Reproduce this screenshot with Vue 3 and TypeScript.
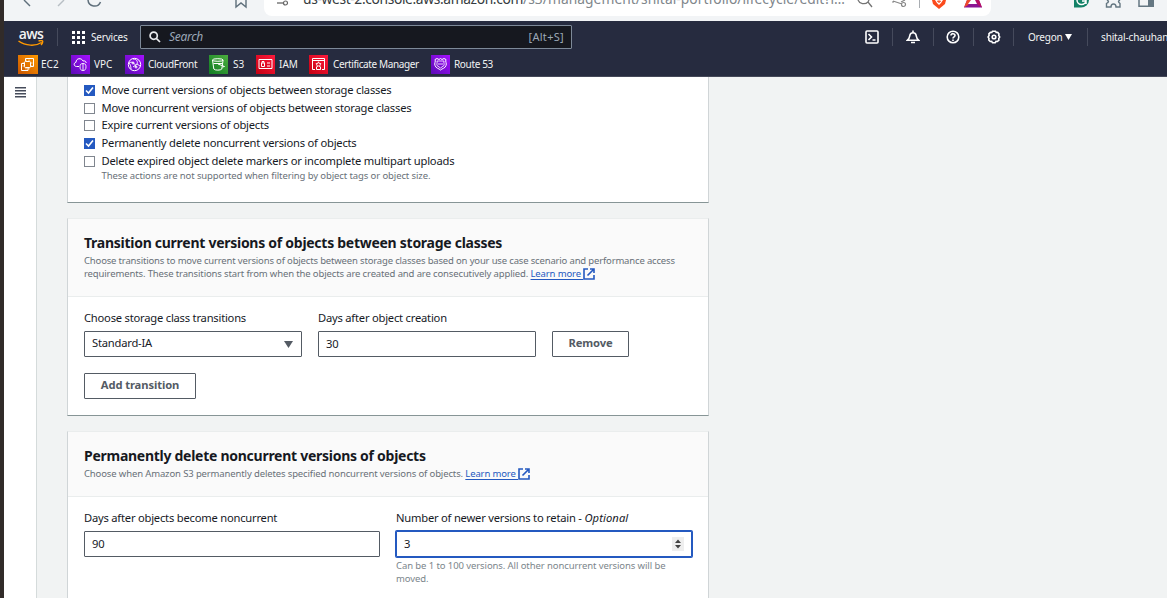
<script setup lang="ts">
import { ref } from 'vue'

interface Service { name: string; icon: string; tone: string }
const services: Service[] = [
  { name: 'EC2', icon: 'ec2', tone: 'orange' },
  { name: 'VPC', icon: 'vpc', tone: 'purple' },
  { name: 'CloudFront', icon: 'cloudfront', tone: 'purple' },
  { name: 'S3', icon: 's3', tone: 'green' },
  { name: 'IAM', icon: 'iam', tone: 'red' },
  { name: 'Certificate Manager', icon: 'cert', tone: 'red' },
  { name: 'Route 53', icon: 'route', tone: 'purple' },
]
const actions = ref([
  { label: 'Move current versions of objects between storage classes', checked: true },
  { label: 'Move noncurrent versions of objects between storage classes', checked: false },
  { label: 'Expire current versions of objects', checked: false },
  { label: 'Permanently delete noncurrent versions of objects', checked: true },
  { label: 'Delete expired object delete markers or incomplete multipart uploads', checked: false },
])
</script>

<template>
  <div class="screen">
    <div class="edge"></div>
    <div class="window">
      <div class="browser">
        <svg class="chrome" width="1163" height="21" viewBox="4 0 1163 21" fill="none">
          <path d="M24 0l6 6" stroke="#5f6f7b" stroke-width="1.4" />
          <path d="M64 0l-6 6" stroke="#b7bec4" stroke-width="1.4" />
          <path d="M88 0a6.5 6.5 0 0 0 12.5 2" stroke="#5f6f7b" stroke-width="1.5" />
          <path d="M236 0v7l5-4 5 4V0" stroke="#5f6f7b" stroke-width="1.4" />
          <path d="M264 0h727v8a8 8 0 0 1-8 8H272a8 8 0 0 1-8-8z" fill="#fff" />
          <path d="M277 3h6" stroke="#666" stroke-width="1.3" />
          <circle cx="285.500" cy="3" r="2" stroke="#666" stroke-width="1.2" />
          <path d="M858 0a6 5.500 0 0 0 10 2l4 5M868 2l1-2" stroke="#737373" stroke-width="1.3" />
          <path d="M893 1l9 3M892 2h2M905 0l-4 2" stroke="#888" stroke-width="1.2" />
          <circle cx="903.500" cy="4.500" r="2" stroke="#888" stroke-width="1.2" />
          <path d="M919.500 0v8" stroke="#a9adb2" />
          <path d="M932 0h14l-1 4-6 5-6-5z" fill="#fb4a1c" />
          <path d="M935 0h8l-2 3-2 2-2-2z" fill="#fff" /><path d="M939 0v3m-2-2 2 1 2-1" stroke="#fb4a1c" />
          <path d="M967 0h12l3 7.500h-18z" fill="#8b1593" /><path d="M967 0h4l-3 5-4 2.500z" fill="#f04a2a" /><path d="M975 0h4l3 7.500-4-2.500z" fill="#b80f63" />
          <path d="M971 0h4l2 4h-9z" fill="#fff" />
          <path d="M1074 0h15a8 7.500 0 0 1-8 7.500h-7z" fill="#138267" />
          <path d="M1077 0a4.500 4.500 0 0 0 9 0M1082 1h4v3" stroke="#fff" stroke-width="1.5" />
          <path d="M1107 0c2 1 2 2-.5 3.500V7h4.500c0-4 5-4 5 0h4V3.500c-2-1.500-2-2.500 0-3.500" stroke="#657782" stroke-width="1.4" />
          <path d="M1139 0v6.300h14V0" stroke="#657782" stroke-width="1.5" /><path d="M1148 0h6v7h-6z" fill="#657782" />
        </svg>
        <div class="url">us-west-2.console.aws.amazon.com<span>/s3/management/shital-portfolio/lifecycle/edit?r…</span></div>
      </div>

      <header class="nav">
        <div class="top">
          <div class="aws"><span>aws</span>
            <svg width="26" height="7" viewBox="0 0 26 7" fill="none" stroke="#f90" stroke-width="1.5"><path d="M0.500 1c7 5 17 5.500 23 1.500M20.500 1c2-.6 3.500-.6 4 0 .3.700-.2 2.500-1.400 3.900" /></svg>
          </div>
          <i class="bar first"></i>
          <svg class="grid" width="13" height="13" fill="#fff"><path d="M0 0h3v3H0zM5 0h3v3H5zM10 0h3v3h-3zM0 5h3v3H0zM5 5h3v3H5zM10 5h3v3h-3zM0 10h3v3H0zM5 10h3v3H5zM10 10h3v3h-3z" /></svg>
          <span class="services">Services</span>
          <div class="search">
            <svg width="12" height="12" viewBox="0 0 12 12" fill="none" stroke="#e8eaed" stroke-width="1.700"><circle cx="4.700" cy="4.700" r="3.600" /><path d="M7.300 7.300 11 11" /></svg>
            <em>Search</em><span>[Alt+S]</span>
          </div>
          <div class="tools">
            <div class="tool t1"><svg width="14" height="14" viewBox="0 0 14 14"><rect x="1" y="1" width="12" height="12" rx="1" /><path d="M3.500 4l3 3-3 3M7.500 10h3" /></svg></div>
            <i class="bar"></i>
            <div class="tool t2"><svg width="14" height="14" viewBox="0 0 14 14"><path d="M7 .5v2M1.500 10.200c1.800-1.500 2-3 2.400-5C4.300 3.300 5.500 2.700 7 2.700s2.700.6 3.100 2.500c.4 2 .6 3.500 2.400 5zM5 12.500h4" /></svg></div>
            <i class="bar"></i>
            <div class="tool t3"><svg width="14" height="14" viewBox="0 0 14 14"><circle cx="7" cy="7" r="5.800" /><path d="M5 5.400C5 3 9 3.200 9 5.400 9 7 7 6.700 7 8.500M7 9.500v1.400" /></svg></div>
            <i class="bar"></i>
            <div class="tool t4"><svg width="14" height="14" viewBox="0 0 14 14"><path d="M5.500 1.200h3l.7 1.300 1.500-.1 1.300 1.500-.3 1.400 1 1.700-1 1.600.2 1.500-1.500 1.400-1.400-.1-.8 1.400H5.500l-.8-1.400-1.500.1L1.800 10l.2-1.400-.9-1.600 1-1.700-.2-1.400 1.500-1.500 1.400.1z" /><circle cx="7" cy="7" r="1.800" /></svg></div>
            <i class="bar"></i>
            <div class="region"><span>Oregon</span><svg width="7" height="6" fill="#fff"><path d="M0 0h7L3.500 6z" /></svg></div>
            <i class="bar"></i>
            <span class="account">shital-chauhan</span>
          </div>
        </div>
        <div class="favorites">
          <div v-for="s in services" :key="s.name" class="favorite" :class="s.icon">
            <span class="tile" :class="s.tone">
              <svg width="19" height="19" viewBox="0 0 19 19" fill="none" stroke="#fff" stroke-width="1">
                <template v-if="s.icon === 'ec2'"><path d="M7.500 6V3.500h8v8h-3M10 13v2.500H3.500v-7H6" /><rect x="6.500" y="6.500" width="6" height="6" rx="1" /><path d="M8 4.500v2M11 4.500v2M12.500 8h2M12.500 11h2M8 12.500v2M11 12.500v2M4.500 8h2M4.500 11h2" stroke-width=".7" /></template>
                <template v-else-if="s.icon === 'vpc'"><path d="M8 11.500H5.500c-3-.2-3-3.800-.5-4.200C5 3 10.500 2.500 12 6c2-.5 3.200.5 3.200 2" /><path d="M12 8.500c2 0 3 .8 3 3.300s-1 3.700-3 3.700-3-1.200-3-3.700 1-3.300 3-3.300zM12 8.500v7" stroke-width=".9" /></template>
                <template v-else-if="s.icon === 'cloudfront'"><circle cx="9.500" cy="9.500" r="6.200" /><path d="M8 4c4 0 5 3 4 5L8 12M4 8c3-2 6 0 7 4M6 14c0-3-1-5-2-6M12 9l3 2" stroke-width=".9" /><circle cx="8" cy="8" r="1" /><circle cx="11" cy="12" r="1" /></template>
                <template v-else-if="s.icon === 's3'"><path d="M3.500 5l1.300 9c1 1.500 7 1.500 8 0l1.300-9M9 9l6.500 2.500-2 .5" /><ellipse cx="8.800" cy="5" rx="5.300" ry="1.300" /><path d="M4.500 8.500h9" /></template>
                <template v-else-if="s.icon === 'iam'"><path d="M3 4.500h13v9H3zM5.500 8h3v3.500h-3zM6 8V6.500h2V8M11 8h3M11 11h3" /></template>
                <template v-else-if="s.icon === 'cert'"><path d="M6 14.500H3.500v-11h12v11H13M3.500 5.500h12M7.500 12v2.500h4V12" /><path d="M9.500 6.800l.8 1.700 1.800.2-1.300 1.200.4 1.800-1.700-.8-1.700.8.400-1.800-1.300-1.200 1.800-.2z" stroke-width=".9" /></template>
                <template v-else><path d="M4 4.500l2-1 2 1 1.500-1 1.500 1 2-1 2 1c-1 2 1 4 0 6-.8 3-4 3-5.500 4.500C8 13.500 5 13.500 4 10.500c-1-2 1-4 0-6z" /><path d="M6 6h7c-.5 1.500.5 3 0 4.500L9.500 13 6 10.500c-.5-1.500.5-3 0-4.500zM7 9h5" stroke-width=".8" /></template>
              </svg>
            </span>
            <span class="name">{{ s.name }}</span>
          </div>
        </div>
      </header>

      <div class="body">
        <aside><svg width="12" height="11" fill="#464c5b"><path d="M0 0h11v1.600H0zM0 3h11v1.600H0zM0 6h11v1.600H0zM0 9h11v1.600H0z" /></svg></aside>
        <main>
          <section class="card actions">
            <label v-for="a in actions" :key="a.label" class="row">
              <span class="box" :class="{ on: a.checked }"><svg v-if="a.checked" width="11" height="11" fill="none" stroke="#fff" stroke-width="1.600"><path d="M2 5.500 4.500 8 9 2.500" /></svg></span>
              <span class="act">{{ a.label }}</span>
            </label>
            <p class="hint">These actions are not supported when filtering by object tags or object size.</p>
          </section>

          <section class="card transition">
            <div class="head">
              <h2>Transition current versions of objects between storage classes</h2>
              <p><span class="l1">Choose transitions to move current versions of objects between storage classes based on your use case scenario and performance access</span><br><span>requirements. These transitions start from when the objects are created and are consecutively applied. </span><a>Learn more <svg width="12" height="12" viewBox="0 0 12 12"><path d="M5 1H1v10h10V7M7 1h4v4M11 1 4.500 7.500" /></svg></a></p>
            </div>
            <div class="content">
              <div class="fields">
                <div class="field w218"><label>Choose storage class transitions</label><div class="input select"><span>Standard-IA</span><svg width="9" height="7" fill="#545b64"><path d="M0 0h9L4.500 7z" /></svg></div></div>
                <div class="field w218"><label>Days after object creation</label><div class="input">30</div></div>
                <button class="remove">Remove</button>
              </div>
              <button class="add">Add transition</button>
            </div>
          </section>

          <section class="card permanent">
            <div class="head">
              <h2>Permanently delete noncurrent versions of objects</h2>
              <p><span>Choose when Amazon S3 permanently deletes specified noncurrent versions of objects. </span><a>Learn more <svg width="12" height="12" viewBox="0 0 12 12"><path d="M5 1H1v10h10V7M7 1h4v4M11 1 4.500 7.500" /></svg></a></p>
            </div>
            <div class="content">
              <div class="fields">
                <div class="field w296"><label>Days after objects become noncurrent</label><div class="input">90</div></div>
                <div class="field w296"><label>Number of newer versions to retain - <em>Optional</em></label>
                  <div class="input focus"><span>3</span><span class="spin"><svg width="8" height="10" fill="#444"><path d="M1 4h6L4 .5zM1 6h6L4 9.500z" /></svg></span></div>
                  <p class="constraint">Can be 1 to 100 versions. All other noncurrent versions will be<br>moved.</p>
                </div>
              </div>
            </div>
          </section>
        </main>
      </div>
    </div>
  </div>
</template>

<style>
body { margin: 0; overflow: hidden; }
</style>
<style scoped>
* { box-sizing: border-box; }
.screen { display: flex; width: 1167px; height: 598px; overflow: hidden; background: #f1f3f3; font: 11.200px/18px "Noto Sans", "Open Sans", sans-serif; letter-spacing: -.22px; color: #16191f; white-space: nowrap; }
.edge { width: 4px; background: #312b29; flex: none; }
.window { width: 1163px; flex: none; display: flex; flex-direction: column; }
svg { display: block; flex: none; }
h2, p { margin: 0; }
.browser { height: 21px; background: #f2f4f6; position: relative; overflow: hidden; flex: none; }
.url { position: absolute; left: 299px; top: -11px; font-size: 13.800px; line-height: 20px; color: #353b40; letter-spacing: -.360px; }
.url span { color: #80868b; letter-spacing: .05px; }
.nav { height: 56px; flex: none; background: #262b3f; border-bottom: 1px solid #444858; color: #f2f3f3; font-size: 10px; letter-spacing: 0; }
.top { height: 31px; display: flex; align-items: center; padding-top: 1px; }
.aws { width: 26px; margin-left: 14px; height: 18px; flex: none; }
.aws span { display: block; font: 600 14px/11px "Open Sans", sans-serif; letter-spacing: -.6px; text-align: center; height: 12px; }
.bar { width: 1px; height: 18px; background: #454a5c; flex: none; }
.bar.first { margin-left: 13px; }
.grid { margin-left: 14px; }
.services { margin-left: 6px; width: 36px; letter-spacing: -.2px; flex: none; }
.search { margin-left: 13px; width: 432px; height: 24px; border: 1px solid #7d8998; border-radius: 1px; background: #16181f; display: flex; align-items: center; padding: 0 7px 0 8px; color: #9ba7b6; font-size: 12px; flex: none; }
.search em { flex: 1; margin-left: 8px; letter-spacing: -.3px; }
.search span { font-size: 11px; letter-spacing: .3px; }
.tools { margin-left: auto; display: flex; align-items: center; width: 302px; }
.tools > * { flex: none; }
.tool { display: flex; }
.tool svg { fill: none; stroke: #fff; stroke-width: 1.600; }
.t1 { width: 27px; }
.t2 { width: 40px; padding-left: 13px; }
.t3 { width: 39px; padding-left: 12px; }
.t4 { width: 39px; padding-left: 13px; }
.region { width: 73px; padding: 0 15px 0 14px; display: flex; align-items: center; justify-content: space-between; letter-spacing: -.2px; }
.account { margin-left: 13px; letter-spacing: -.15px; }
.favorites { height: 24px; display: flex; align-items: center; padding-left: 14px; }
.favorite { display: flex; align-items: center; gap: 4px; flex: none; }
.ec2 { width: 53px; }
.vpc { width: 54px; }
.cloudfront { width: 84px; letter-spacing: -.35px; }
.s3 { width: 47px; gap: 5px; }
.iam { width: 53px; }
.cert { width: 122px; letter-spacing: -.38px; }
.cert .name { margin-left: 1px; }
.route { letter-spacing: -.35px; }
.cloudfront { letter-spacing: -.3px; }
.tile { width: 19px; height: 19px; flex: none; }
.orange { width: 20px; background: linear-gradient(45deg, #c95500, #ff9900); }
.orange + .name { margin-left: -1px; }
.purple { background: linear-gradient(45deg, #5b0ab5, #a510ff); }
.green { background: linear-gradient(45deg, #107c24, #4cad3e); }
.red { background: linear-gradient(45deg, #c40012, #ff1a3c); }
.body { flex: 1; display: flex; min-height: 0; }
aside { width: 33px; background: #fff; border-right: 1px solid #d5dbdb; padding: 10px 0 0 11px; }
main { margin-left: 30px; width: 642px; display: flex; flex-direction: column; gap: 15px; }
.card { background: #fff; border: 1px solid #d0d5d7; border-top-color: #eaeded; border-bottom-color: #879596; flex: none; }
.actions { height: 126px; padding: 4px 0 0 16px; border-top: 0; }
.row { display: flex; align-items: center; height: 17.750px; gap: 6.500px; }
.row:last-of-type { letter-spacing: -.2px; }
.box { width: 11px; height: 11px; border: 1px solid #80868f; margin-top: 1px; }
.box.on { background: #2459c0; border: 0; }
.hint { font-size: 9.500px; line-height: 12px; color: #687078; margin-left: 17.500px; letter-spacing: -.105px; }
.transition { height: 198px; }
.permanent { height: 240px; }
.head { background: #fafafa; border-bottom: 1px solid #eaeded; padding: 14px 16px 0; }
.transition .head { height: 78px; }
.permanent .head { height: 65px; }
h2 { font-size: 14px; line-height: 20px; font-weight: 700; letter-spacing: -.27px; }
.head p { font-size: 9.500px; line-height: 13px; color: #687078; margin-top: 1px; letter-spacing: -.130px; }
.head .l1 { letter-spacing: -.165px; }
a { color: #2459c0; text-decoration: underline; text-underline-offset: 2px; }
a svg { display: inline-block; vertical-align: -3px; fill: none; stroke: #2459c0; stroke-width: 1.600; }
.content { padding: 12px 16px; }
.fields { display: flex; gap: 16px; align-items: flex-start; }
.w218 { width: 218px; }
.w296 { width: 296px; }
.field label { display: block; line-height: 18px; margin-bottom: 4px; }
.field em { letter-spacing: .1px; }
.input { height: 26px; border: 1px solid #545b64; border-radius: 1px; display: flex; align-items: center; padding: 0 7px; background: #fff; }
.select { justify-content: space-between; padding: 0 8px 0 7px; }
.select span { padding-bottom: 2px; }
.focus { box-shadow: 0 0 0 1px #2459c0; border-color: #2459c0; justify-content: space-between; }
.spin { width: 12px; height: 14px; background: #eee; padding: 2px; }
.constraint { font-size: 9.500px; line-height: 13px; color: #7b858b; margin-top: 2px; letter-spacing: -.09px; }
button { font: 700 11.200px/18px "Noto Sans", sans-serif; letter-spacing: -.1px; color: #545b64; background: #fff; border: 1px solid #545b64; border-radius: 1px; height: 26px; padding: 0 0 2px; }
.remove { margin-top: 22px; width: 77px; }
.add { width: 112px; margin-top: 16px; display: block; }
</style>
